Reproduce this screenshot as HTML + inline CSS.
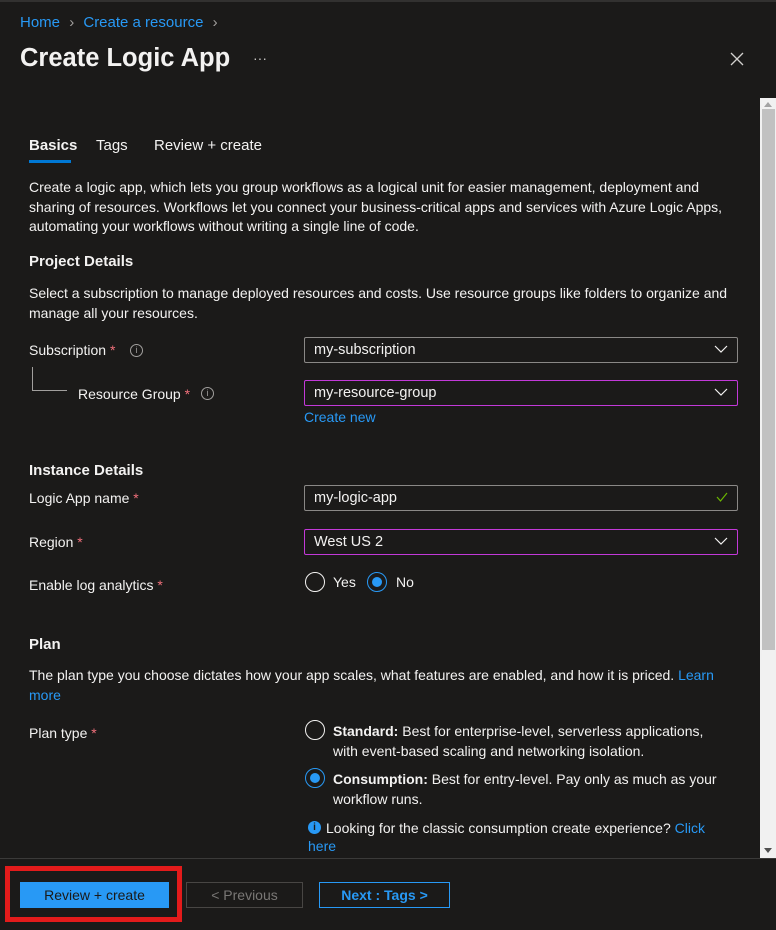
<!DOCTYPE html>
<html><head><meta charset="utf-8"><style>
*{margin:0;padding:0;box-sizing:border-box}
body{width:776px;height:930px;background:#1b1a19;color:#f3f2f1;font-family:"Liberation Sans",sans-serif;font-size:14px;position:relative;overflow:hidden}
.a{position:absolute;white-space:nowrap}
.l{color:#2899f5}
.r{color:#f1707b}
.b{font-weight:bold}
.box{position:absolute;left:304px;width:434px;height:26px;border:1px solid #8a8886;border-radius:2px;padding-left:9px;line-height:24px;font-size:14.5px}
.pk{border-color:#c239d8}
.chev{position:absolute;right:9px;top:7px}
.rad{position:absolute;width:20px;height:20px;border:1px solid #f3f2f1;border-radius:50%}
.rad.on{border-color:#2899f5}
.rad.on:after{content:"";position:absolute;left:4px;top:4px;width:10px;height:10px;border-radius:50%;background:#2899f5}
.info{position:absolute;width:13px;height:13px;border:1px solid #a19f9d;border-radius:50%;font-size:9px;line-height:11px;text-align:center;color:#a19f9d}
</style></head><body>
<div class="a" style="left:0;top:0;width:776px;height:2px;background:#323130"></div>
<div class="a" style="left:20px;top:14px;font-size:15px"><span class="l">Home</span> <span style="color:#a19f9d;margin:0 5px">&#x203A;</span> <span class="l">Create a resource</span> <span style="color:#a19f9d;margin-left:5px">&#x203A;</span></div>
<div class="a b" style="left:20px;top:44px;font-size:25.5px;font-weight:600">Create Logic App</div>
<div class="a" style="left:253px;top:50px;color:#c8c6c4">···</div>
<svg class="a" style="left:730px;top:52px" width="14" height="14"><path d="M1 1L13 13M13 1L1 13" stroke="#d2d0ce" stroke-width="1.3"/></svg>

<div class="a" style="left:760px;top:98px;width:16px;height:760px;background:#f1f1f1"></div>
<div class="a" style="left:762px;top:109px;width:13px;height:541px;background:#c1c1c1"></div>
<svg class="a" style="left:764px;top:102px" width="8" height="5"><path d="M0 5L4 0L8 5Z" fill="#a3a3a3"/></svg>
<svg class="a" style="left:764px;top:848px" width="8" height="5"><path d="M0 0L4 5L8 0Z" fill="#505050"/></svg>

<div class="a b" style="left:29px;top:137px;font-size:15px;font-weight:600">Basics</div>
<div class="a" style="left:29px;top:160px;width:42px;height:3px;background:#0078d4"></div>
<div class="a" style="left:96px;top:137px;font-size:15px">Tags</div>
<div class="a" style="left:154px;top:137px;font-size:15px">Review + create</div>

<div class="a" style="left:29px;top:178px;line-height:19.5px">Create a logic app, which lets you group workflows as a logical unit for easier management, deployment and<br>sharing of resources. Workflows let you connect your business-critical apps and services with Azure Logic Apps,<br>automating your workflows without writing a single line of code.</div>
<div class="a b" style="left:29px;top:253px;font-size:15px">Project Details</div>
<div class="a" style="left:29px;top:284px;line-height:19.5px">Select a subscription to manage deployed resources and costs. Use resource groups like folders to organize and<br>manage all your resources.</div>

<div class="a" style="left:29px;top:342px">Subscription <span class="r">*</span></div>
<div class="info" style="left:130px;top:344px">i</div>
<div class="box" style="top:337px">my-subscription<svg class="chev" width="14" height="8"><path d="M1 1L7 7L13 1" stroke="#f3f2f1" fill="none" stroke-width="1.2"/></svg></div>
<div class="a" style="left:32px;top:367px;width:1px;height:24px;background:#a19f9d"></div>
<div class="a" style="left:32px;top:390px;width:35px;height:1px;background:#a19f9d"></div>
<div class="a" style="left:78px;top:386px">Resource Group <span class="r">*</span></div>
<div class="info" style="left:201px;top:387px">i</div>
<div class="box pk" style="top:380px">my-resource-group<svg class="chev" width="14" height="8"><path d="M1 1L7 7L13 1" stroke="#f3f2f1" fill="none" stroke-width="1.2"/></svg></div>
<div class="a l" style="left:304px;top:409px">Create new</div>

<div class="a b" style="left:29px;top:462px;font-size:15px">Instance Details</div>
<div class="a" style="left:29px;top:490px">Logic App name <span class="r">*</span></div>
<div class="box" style="top:485px">my-logic-app<svg class="chev" style="top:6px" width="12" height="10"><path d="M1 5L4.5 9L11 1" stroke="#6bb700" fill="none" stroke-width="1.2"/></svg></div>
<div class="a" style="left:29px;top:534px">Region <span class="r">*</span></div>
<div class="box pk" style="top:529px">West US 2<svg class="chev" width="14" height="8"><path d="M1 1L7 7L13 1" stroke="#f3f2f1" fill="none" stroke-width="1.2"/></svg></div>
<div class="a" style="left:29px;top:577px">Enable log analytics <span class="r">*</span></div>
<div class="rad" style="left:305px;top:572px"></div>
<div class="a" style="left:333px;top:574px">Yes</div>
<div class="rad on" style="left:367px;top:572px"></div>
<div class="a" style="left:396px;top:574px">No</div>

<div class="a b" style="left:29px;top:636px;font-size:15px">Plan</div>
<div class="a" style="left:29px;top:666px;line-height:19.5px">The plan type you choose dictates how your app scales, what features are enabled, and how it is priced. <span class="l">Learn</span><br><span class="l">more</span></div>
<div class="a" style="left:29px;top:725px">Plan type <span class="r">*</span></div>
<div class="rad" style="left:305px;top:720px"></div>
<div class="a" style="left:333px;top:721px;line-height:20px"><b>Standard:</b> Best for enterprise-level, serverless applications,<br>with event-based scaling and networking isolation.</div>
<div class="rad on" style="left:305px;top:768px"></div>
<div class="a" style="left:333px;top:769px;line-height:20px"><b>Consumption:</b> Best for entry-level. Pay only as much as your<br>workflow runs.</div>
<div class="a" style="left:308px;top:821px;width:13px;height:13px;border-radius:50%;background:#2899f5;color:#1b1a19;font-size:10px;line-height:13px;text-align:center;font-weight:bold">i</div>
<div class="a" style="left:326px;top:818px;line-height:20px">Looking for the classic consumption create experience? <span class="l">Click</span></div>
<div class="a l" style="left:308px;top:838px">here</div>

<div class="a" style="left:0;top:858px;width:776px;height:72px;background:#1b1a19;border-top:1px solid #3b3a39"></div>
<div class="a" style="left:5px;top:866px;width:177px;height:56px;border:5px solid #e31b1b"></div>
<div class="a" style="left:20px;top:882px;width:149px;height:26px;background:#2899f5;color:#1b1a19;text-align:center;line-height:26px">Review + create</div>
<div class="a" style="left:186px;top:882px;width:117px;height:26px;border:1px solid #484644;color:#797775;text-align:center;line-height:24px">&lt; Previous</div>
<div class="a" style="left:319px;top:882px;width:131px;height:26px;border:1px solid #2899f5;color:#2899f5;text-align:center;line-height:24px;font-weight:600">Next : Tags &gt;</div>
</body></html>
